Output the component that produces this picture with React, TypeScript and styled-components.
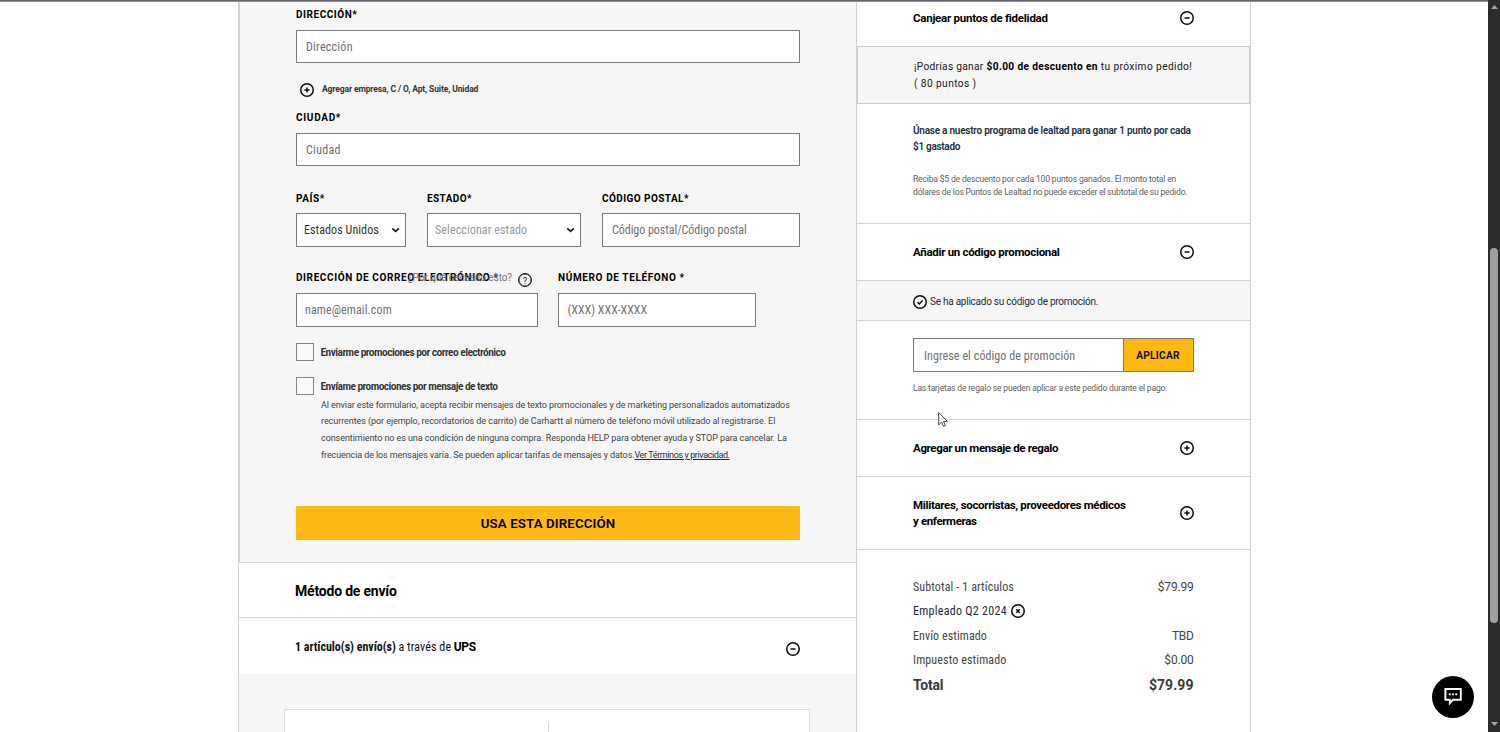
import React from "react";
import styled, { createGlobalStyle, css } from "styled-components";

const GlobalStyle = createGlobalStyle`
  *, *::before, *::after { box-sizing: border-box; }
  body {
    margin: 0;
    overflow: hidden;
    background: #fff;
    font-family: Roboto, "Liberation Sans", sans-serif;
    font-size: 12px;
    color: #444;
  }
  svg { display: block; }
`;

const colors = {
  line: "#d3d3d3",
  field: "#7c7c7c",
  soft: "#f6f6f6",
  gold: "#fdb913",
  navy: "#1b2f42",
};

type TextProps = { $spacing?: number };
const tracked = css<TextProps>`
  letter-spacing: ${(p) => p.$spacing ?? 0}px;
  white-space: nowrap;
`;

/* Page frame */

const Viewport = styled.div`
  position: relative;
  display: flex;
  height: 732px;
  overflow: hidden;
`;

const TopEdge = styled.div`
  position: absolute;
  top: 0;
  left: 0;
  width: 1488px;
  height: 2px;
  background: linear-gradient(#67626f 50%, #918d98 50%);
`;

const Page = styled.main`
  flex: 1;
  display: flex;
  padding-left: 238px;
`;

const CheckoutColumn = styled.section`
  width: 618px;
  border-left: 1px solid ${colors.line};
`;

const SummaryColumn = styled.aside`
  width: 395px;
  border: solid ${colors.line};
  border-width: 0 1px;
`;

/* Address form */

const AddressForm = styled.form`
  height: 563px;
  padding: 7px 56px 0;
  background: ${colors.soft};
  border-left: 1px solid ${colors.line};
  border-bottom: 1px solid ${colors.line};
`;

const FieldRow = styled.div<{ $gap?: number; $top?: number }>`
  display: flex;
  gap: ${(p) => p.$gap ?? 0}px;
  margin-top: ${(p) => p.$top ?? 0}px;
`;

const Field = styled.div<{ $width?: number; $gap?: number }>`
  position: relative;
  display: flex;
  flex-direction: column;
  gap: ${(p) => p.$gap ?? 7}px;
  ${(p) => (p.$width ? `width: ${p.$width}px;` : "flex: 1;")}
`;

const Label = styled.label<TextProps>`
  ${tracked}
  height: 16px;
  line-height: 16px;
  font-size: 10px;
  font-weight: 700;
  color: #000;
`;

const Control = styled.div<{ $pad?: number; $height?: number; $tone?: string }>`
  display: flex;
  align-items: center;
  justify-content: space-between;
  height: ${(p) => p.$height ?? 34}px;
  padding: 0 5px 0 ${(p) => p.$pad ?? 9}px;
  border: 1px solid ${colors.field};
  background: #fff;
  color: ${(p) => p.$tone ?? "#707070"};
`;

const Value = styled.span<TextProps>`
  ${tracked}
  font-stretch: 75%;
  line-height: 16px;
`;

const AddLine = styled.div`
  display: flex;
  align-items: center;
  gap: 8px;
  height: 20px;
  margin: 17px 0 10px;
  padding-left: 4px;
`;

const AddLineText = styled.span<TextProps>`
  ${tracked}
  font-size: 8.5px;
  font-weight: 700;
  line-height: 14px;
  padding-bottom: 2px;
  color: #333;
`;

const HelpHint = styled.div`
  position: absolute;
  top: -1px;
  right: 6px;
  display: flex;
  align-items: center;
  gap: 6px;
  height: 16px;
`;

const HelpText = styled.span<TextProps>`
  ${tracked}
  font-size: 10px;
  color: #777;
`;

const HelpIcon = styled.span`
  display: grid;
  place-items: center;
  width: 14px;
  height: 14px;
  margin-top: 6px;
  border: 1.5px solid #111;
  border-radius: 50%;
  box-shadow: inset 0 0 0 0.4px #111;
  font-size: 9.5px;
  line-height: 11px;
  color: #222;
`;

const CheckRow = styled.div<{ $top: number }>`
  display: flex;
  gap: 7px;
  height: 18px;
  margin-top: ${(p) => p.$top}px;
`;

const Checkbox = styled.span`
  width: 17.5px;
  height: 18px;
  border: 1px solid #858585;
  background: #f9f9f9;
`;

const CheckLabel = styled.span<TextProps>`
  ${tracked}
  font-size: 11.5px;
  font-weight: 600;
  font-stretch: 75%;
  line-height: 18px;
  color: #333;
`;

const Legal = styled.div`
  display: flex;
  flex-direction: column;
  margin: 1.5px 0 0 25px;
`;

const LegalLine = styled.span<TextProps>`
  ${tracked}
  font-size: 9px;
  line-height: 16.8px;
  color: #444;
`;

const LegalLink = styled.a<TextProps>`
  ${tracked}
  color: ${colors.navy};
  text-decoration: underline;
`;

const SubmitButton = styled.button<TextProps>`
  display: block;
  width: 100%;
  height: 34px;
  margin-top: 42.3px;
  padding: 1px 0 0;
  border: 0;
  background: ${colors.gold};
  font: 600 13.3px Roboto, sans-serif;
  ${tracked}
  color: #000;
`;

/* Shipping */

const ShippingTitle = styled.h2<TextProps>`
  ${tracked}
  height: 55px;
  margin: 0;
  padding: 1px 0 0 56px;
  border-bottom: 1px solid ${colors.line};
  font-size: 14px;
  font-weight: 700;
  line-height: 54px;
  color: #000;
`;

const ShipmentRow = styled.div`
  display: flex;
  align-items: center;
  justify-content: space-between;
  height: 56px;
  padding: 0 56px 0 56px;
`;

const ShipmentText = styled.div`
  display: flex;
  gap: 2.5px;
  padding-top: 2px;
  color: #111;
`;

const Strong = styled.b<TextProps>`
  ${tracked}
  font-weight: 700;
  color: #000;
`;

const Narrow = styled.span<TextProps & { $bold?: boolean }>`
  ${tracked}
  font-stretch: 75%;
  font-weight: ${(p) => (p.$bold ? 700 : 400)};
`;

const ShipmentIcon = styled.span`
  margin-top: 6px;
`;

const ShippingOptions = styled.div`
  height: 60px;
  padding: 35px 46px 0 45px;
  background: ${colors.soft};
`;

const OptionCard = styled.div`
  display: flex;
  justify-content: center;
  height: 40px;
  padding: 12px 0 0 2px;
  border: 1px solid #dcdcdc;
  background: #fff;
`;

const OptionDivider = styled.span`
  width: 1px;
  background: #d6d6d6;
`;

/* Order summary */

const PanelHeader = styled.header<{ $height: number; $bottom?: number; $bare?: boolean }>`
  display: flex;
  align-items: center;
  justify-content: space-between;
  height: ${(p) => p.$height}px;
  padding: 0 56.5px ${(p) => p.$bottom ?? 0}px 56px;
  ${(p) => !p.$bare && `border-bottom: 1px solid ${colors.line};`}
`;

const PanelTitle = styled.h3`
  margin: 0;
  display: flex;
  flex-direction: column;
  font-size: 11.5px;
  line-height: 16.5px;
  color: #000;
`;

const TitleLine = styled.span<TextProps>`
  ${tracked}
`;

const PointsBox = styled.div`
  display: flex;
  flex-direction: column;
  justify-content: center;
  height: 58px;
  padding: 1px 0 0 56px;
  border: 1px solid #cbcbcb;
  background: ${colors.soft};
  font-size: 10.2px;
  line-height: 16.4px;
  color: #1a1a1a;
`;

const PointsLine = styled.div`
  display: flex;
  gap: 3px;
`;

const Piece = styled.span<TextProps>`
  ${tracked}
`;

const LoyaltyPanel = styled.div`
  height: 120px;
  padding: 18.6px 0 0 56px;
  border-bottom: 1px solid ${colors.line};
`;

const LoyaltyLink = styled.a`
  display: flex;
  flex-direction: column;
  margin-bottom: 17.4px;
  font-size: 10px;
  font-weight: 600;
  line-height: 16.4px;
  color: ${colors.navy};
`;

const FinePrint = styled.p`
  display: flex;
  flex-direction: column;
  margin: 0;
  font-size: 8.5px;
  line-height: 13.3px;
  color: #5e5e5e;
`;

const PromoMessage = styled.div`
  display: flex;
  align-items: center;
  gap: 3px;
  height: 40px;
  padding: 1px 0 0 56px;
  border-bottom: 1px solid ${colors.line};
  background: ${colors.soft};
  font-size: 10px;
  color: ${colors.navy};
`;

const MessageIcon = styled.span`
  margin-top: 2px;
`;

const PromoPanel = styled.div`
  display: flex;
  flex-direction: column;
  gap: 9.5px;
  height: 99px;
  padding: 17px 56px 0;
  border-bottom: 1px solid ${colors.line};
`;

const PromoForm = styled.div`
  display: flex;
  height: 34px;
  border: 1px solid ${colors.field};
`;

const PromoInput = styled.div`
  flex: 1;
  display: flex;
  align-items: center;
  padding: 2px 0 0 10px;
  color: #707070;
`;

const ApplyButton = styled.button<TextProps>`
  width: 70px;
  padding: 0 1px 0 0;
  border: 0;
  border-left: 1px solid ${colors.field};
  background: ${colors.gold};
  font: 700 10.2px Roboto, sans-serif;
  ${tracked}
  color: #111;
`;

const Totals = styled.div`
  padding: 24.5px 56.5px 0 56px;
`;

const TotalRow = styled.div<{ $height: number; $grand?: boolean; $tone?: string }>`
  display: flex;
  align-items: center;
  justify-content: space-between;
  height: ${(p) => p.$height}px;
  color: ${(p) => p.$tone ?? "#444"};
  ${(p) => p.$grand && "font-size: 14px; font-weight: 700; color: #3a3a3a;"}
`;

const Discount = styled.span`
  display: flex;
  align-items: center;
  gap: 4px;
  padding-bottom: 1px;
`;

/* Floating parts */

const Scrollbar = styled.div`
  width: 12px;
  display: flex;
  flex-direction: column;
  align-items: center;
  justify-content: space-between;
  padding: 5px 0 6px;
  background: #2c2c2c;
`;

const ScrollThumb = styled.div`
  position: absolute;
  top: 248px;
  right: 2px;
  width: 8px;
  height: 375px;
  border-radius: 4px;
  background: #9f9f9f;
`;

const ChatButton = styled.button`
  position: absolute;
  left: 1432px;
  top: 676px;
  display: grid;
  place-items: center;
  width: 42px;
  height: 42px;
  padding: 0;
  border: 0;
  border-radius: 50%;
  background: #000;
`;

const Pointer = styled.svg`
  position: absolute;
  left: 937px;
  top: 411px;
`;

const glyphs = {
  plus: "M4.4 7h5.2M7 4.4v5.2",
  minus: "M4.5 7h5",
  check: "M4.5 7.2l1.8 1.7 3.3-3.5",
  cross: "M5.3 5.3l3.4 3.4M8.7 5.3l-3.4 3.4",
};

function CircleIcon({ kind }: { kind: keyof typeof glyphs }) {
  return (
    <svg width="14" height="14" viewBox="0 0 14 14" fill="none" stroke="#0c0c0c" strokeWidth="1.5">
      <circle cx="7" cy="7" r="6.25" />
      <path d={glyphs[kind]} />
    </svg>
  );
}

function Chevron() {
  return (
    <svg width="10" height="10" viewBox="0 0 10 10" fill="none" stroke="#1a1a1a" strokeWidth="1.7">
      <path d="M2.3 3.3l3.3 3.1 3.3-3.1" />
    </svg>
  );
}

function Arrow({ down }: { down?: boolean }) {
  return (
    <svg width="7" height="4" viewBox="0 0 7 4" fill="#a8a8a8">
      <path d={down ? "M0 0h7L3.5 4z" : "M0 4h7L3.5 0z"} />
    </svg>
  );
}

export default function App() {
  return (
    <Viewport>
      <GlobalStyle />
      <Page>
        <CheckoutColumn>
          <AddressForm>
            <Field>
              <Label $spacing={0.55}>DIRECCIÓN*</Label>
              <Control $height={33}>
                <Value $spacing={0.25}>Dirección</Value>
              </Control>
            </Field>
            <AddLine>
              <CircleIcon kind="plus" />
              <AddLineText $spacing={-0.11}>Agregar empresa, C / O, Apt, Suite, Unidad</AddLineText>
            </AddLine>
            <Field>
              <Label $spacing={0.7}>CIUDAD*</Label>
              <Control $height={33}>
                <Value $spacing={0.3}>Ciudad</Value>
              </Control>
            </Field>
            <FieldRow $gap={21} $top={25}>
              <Field $width={110} $gap={6}>
                <Label $spacing={0.6}>PAÍS*</Label>
                <Control $pad={7} $tone="#333">
                  <Value $spacing={0.08}>Estados Unidos</Value>
                  <Chevron />
                </Control>
              </Field>
              <Field $width={154} $gap={6}>
                <Label $spacing={0.41}>ESTADO*</Label>
                <Control $pad={7} $tone="#999">
                  <Value $spacing={0.1}>Seleccionar estado</Value>
                  <Chevron />
                </Control>
              </Field>
              <Field $gap={6}>
                <Label $spacing={0.43}>CÓDIGO POSTAL*</Label>
                <Control>
                  <Value $spacing={-0.04}>Código postal/Código postal</Value>
                </Control>
              </Field>
            </FieldRow>
            <FieldRow $gap={20} $top={23}>
              <Field $width={242}>
                <Label $spacing={0.6}>DIRECCIÓN DE CORREO ELECTRÓNICO *</Label>
                <HelpHint>
                  <HelpText $spacing={-0.08}>¿Por qué necesito esto?</HelpText>
                  <HelpIcon>?</HelpIcon>
                </HelpHint>
                <Control $pad={8}>
                  <Value $spacing={0.12}>name@email.com</Value>
                </Control>
              </Field>
              <Field $width={198}>
                <Label $spacing={0.62}>NÚMERO DE TELÉFONO *</Label>
                <Control $pad={8.5}>
                  <Value $spacing={0.03}>(XXX) XXX-XXXX</Value>
                </Control>
              </Field>
            </FieldRow>
            <CheckRow $top={16}>
              <Checkbox />
              <CheckLabel $spacing={-0.55}>Enviarme promociones por correo electrónico</CheckLabel>
            </CheckRow>
            <CheckRow $top={16}>
              <Checkbox />
              <CheckLabel $spacing={-0.57}>Envíame promociones por mensaje de texto</CheckLabel>
            </CheckRow>
            <Legal>
              <LegalLine $spacing={-0.098}>
                Al enviar este formulario, acepta recibir mensajes de texto promocionales y de marketing personalizados automatizados
              </LegalLine>
              <LegalLine $spacing={-0.067}>
                recurrentes (por ejemplo, recordatorios de carrito) de Carhartt al número de teléfono móvil utilizado al registrarse. El
              </LegalLine>
              <LegalLine $spacing={-0.066}>
                consentimiento no es una condición de ninguna compra. Responda HELP para obtener ayuda y STOP para cancelar. La
              </LegalLine>
              <LegalLine $spacing={-0.1}>
                frecuencia de los mensajes varía. Se pueden aplicar tarifas de mensajes y datos.
                <LegalLink $spacing={-0.4}>Ver Términos y privacidad.</LegalLink>
              </LegalLine>
            </Legal>
            <SubmitButton $spacing={0.12}>USA ESTA DIRECCIÓN</SubmitButton>
          </AddressForm>

          <ShippingTitle $spacing={-0.2}>Método de envío</ShippingTitle>
          <ShipmentRow>
            <ShipmentText>
              <Narrow $bold $spacing={-0.02}>1 artículo(s) envío(s)</Narrow>
              <Narrow $spacing={0.1}>a través de</Narrow>
              <Strong $spacing={-0.3}>UPS</Strong>
            </ShipmentText>
            <ShipmentIcon>
              <CircleIcon kind="minus" />
            </ShipmentIcon>
          </ShipmentRow>
          <ShippingOptions>
            <OptionCard>
              <OptionDivider />
            </OptionCard>
          </ShippingOptions>
        </CheckoutColumn>

        <SummaryColumn>
          <PanelHeader $height={46} $bottom={10} $bare>
            <PanelTitle>
              <TitleLine $spacing={-0.25}>Canjear puntos de fidelidad</TitleLine>
            </PanelTitle>
            <CircleIcon kind="minus" />
          </PanelHeader>
          <PointsBox>
            <PointsLine>
              <Piece $spacing={0.28}>¡Podrías ganar</Piece>
              <Strong $spacing={0.34}>$0.00 de descuento en</Strong>
              <Piece $spacing={0.38}>tu próximo pedido!</Piece>
            </PointsLine>
            <Piece $spacing={0.4}>( 80 puntos )</Piece>
          </PointsBox>
          <LoyaltyPanel>
            <LoyaltyLink>
              <Piece $spacing={-0.24}>Únase a nuestro programa de lealtad para ganar 1 punto por cada</Piece>
              <Piece $spacing={-0.3}>$1 gastado</Piece>
            </LoyaltyLink>
            <FinePrint>
              <Piece $spacing={-0.15}>Reciba $5 de descuento por cada 100 puntos ganados. El monto total en</Piece>
              <Piece $spacing={-0.16}>dólares de los Puntos de Lealtad no puede exceder el subtotal de su pedido.</Piece>
            </FinePrint>
          </LoyaltyPanel>

          <PanelHeader $height={57}>
            <PanelTitle>
              <TitleLine $spacing={-0.3}>Añadir un código promocional</TitleLine>
            </PanelTitle>
            <CircleIcon kind="minus" />
          </PanelHeader>
          <PromoMessage>
            <MessageIcon>
              <CircleIcon kind="check" />
            </MessageIcon>
            <Piece $spacing={-0.25}>Se ha aplicado su código de promoción.</Piece>
          </PromoMessage>
          <PromoPanel>
            <PromoForm>
              <PromoInput>
                <Value $spacing={0.08}>Ingrese el código de promoción</Value>
              </PromoInput>
              <ApplyButton $spacing={0.22}>APLICAR</ApplyButton>
            </PromoForm>
            <FinePrint>
              <Piece $spacing={-0.165}>Las tarjetas de regalo se pueden aplicar a este pedido durante el pago.</Piece>
            </FinePrint>
          </PromoPanel>

          <PanelHeader $height={57}>
            <PanelTitle>
              <TitleLine $spacing={-0.35}>Agregar un mensaje de regalo</TitleLine>
            </PanelTitle>
            <CircleIcon kind="plus" />
          </PanelHeader>
          <PanelHeader $height={73}>
            <PanelTitle>
              <TitleLine $spacing={-0.32}>Militares, socorristas, proveedores médicos</TitleLine>
              <TitleLine $spacing={-0.37}>y enfermeras</TitleLine>
            </PanelTitle>
            <CircleIcon kind="plus" />
          </PanelHeader>

          <Totals>
            <TotalRow $height={24.5}>
              <Narrow $spacing={0.12}>Subtotal - 1 artículos</Narrow>
              <Piece $spacing={-0.2}>$79.99</Piece>
            </TotalRow>
            <TotalRow $height={25} $tone={colors.navy}>
              <Discount>
                <Narrow $spacing={0.28}>Empleado Q2 2024</Narrow>
                <CircleIcon kind="cross" />
              </Discount>
            </TotalRow>
            <TotalRow $height={24}>
              <Narrow $spacing={0.09}>Envío estimado</Narrow>
              <Piece $spacing={-0.3}>TBD</Piece>
            </TotalRow>
            <TotalRow $height={23}>
              <Narrow $spacing={0.13}>Impuesto estimado</Narrow>
              <Piece $spacing={-0.2}>$0.00</Piece>
            </TotalRow>
            <TotalRow $height={28.5} $grand>
              <Piece $spacing={-0.2}>Total</Piece>
              <Piece $spacing={0.06}>$79.99</Piece>
            </TotalRow>
          </Totals>
        </SummaryColumn>
      </Page>

      <Scrollbar>
        <Arrow />
        <Arrow down />
        <ScrollThumb />
      </Scrollbar>
      <TopEdge />
      <ChatButton aria-label="Chat">
        <svg width="20" height="20" viewBox="0 0 20 20" fill="none" stroke="#fff" strokeWidth="1.9">
          <path d="M2.4 2h15.4v10.8H10l-3.2 3.4v-3.4H2.4z" />
          <path d="M5.8 7.4h2M9 7.4h2M12.2 7.4h2" />
        </svg>
      </ChatButton>
      <Pointer width="12" height="18" viewBox="0 0 12 18" fill="#fff" stroke="#333" strokeWidth="0.9">
        <path d="M1.7 1.5v12.3l2.9-2.7 1.9 4.4 1.9-.8-1.9-4.3h3.9z" />
      </Pointer>
    </Viewport>
  );
}
